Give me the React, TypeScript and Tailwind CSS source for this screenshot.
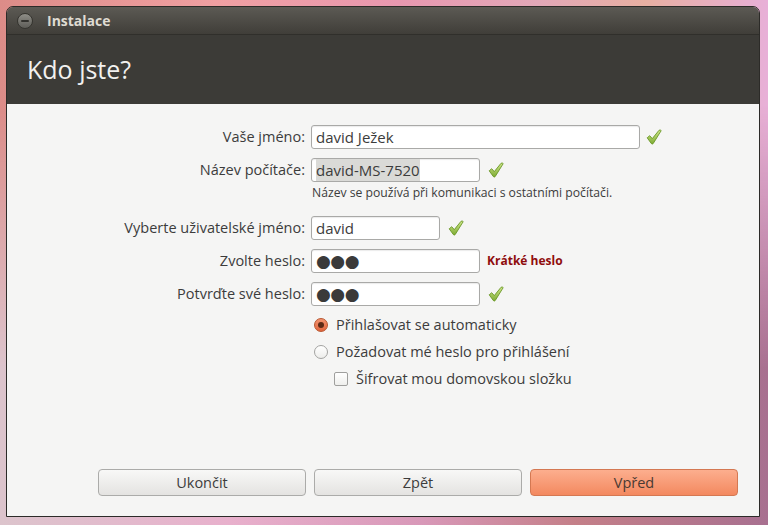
import React from 'react';

// Ubuntu installer, "Kdo jste?" (who are you) step
const FONT = "font-['Open_Sans','Noto_Sans',sans-serif]";

function Check() {
  return (
    <svg width="18" height="18" viewBox="0 0 18 18" className="shrink-0">
      <defs>
        <linearGradient id="chk" x1="0" y1="0" x2="0" y2="1">
          <stop offset="0" stopColor="#d2e88c" />
          <stop offset="1" stopColor="#7dab33" />
        </linearGradient>
      </defs>
      <path
        d="M2.2 9.8 L4.7 7.7 L7.3 10.6 L14 2.3 Q15.3 1.5 16.2 2.6 L8.3 15.4 Q7.3 16.7 6.3 15.5 Z"
        fill="url(#chk)"
        stroke="#6a9727"
        strokeWidth="0.9"
        strokeLinejoin="round"
      />
    </svg>
  );
}

function Field({ width, children }: { width: string; children: React.ReactNode }) {
  return (
    <div
      className={`ml-[6px] flex h-[24px] items-center rounded-[3px] border border-[#a9a9a7] bg-white pl-[4px] text-[15px] text-[#3c3c3c] shadow-[inset_0_1px_1px_rgba(0,0,0,0.08)] ${width}`}
    >
      {children}
    </div>
  );
}

function Row({ label, children }: { label: string; children: React.ReactNode }) {
  return (
    <div className="flex h-[24px] items-center">
      <div className="w-[298px] text-right text-[14.5px] text-[#3c3c3c]">{label}</div>
      {children}
    </div>
  );
}

function Dots() {
  return (
    <span className="font-['DejaVu_Sans',sans-serif] text-[17px] leading-none tracking-[-0.5px] text-[#3a3a3a]">
      ●●●
    </span>
  );
}

function Button({ label, primary }: { label: string; primary?: boolean }) {
  return (
    <button
      className={
        primary
          ? 'h-[27px] w-[208px] rounded-[4px] border border-[#d47852] bg-gradient-to-b from-[#fcae8e] to-[#f3895f] text-[14.5px] text-[#4a3a33]'
          : 'h-[27px] w-[208px] rounded-[4px] border border-[#ababa9] bg-gradient-to-b from-[#f8f8f7] to-[#e4e3e1] text-[14.5px] text-[#3c3c3c]'
      }
    >
      {label}
    </button>
  );
}

export default function App() {
  return (
    <div
      className={`relative h-[525px] w-[768px] overflow-hidden bg-[linear-gradient(to_right,#dc8c88,#f0a0a2_28%,#e898b0_52%,#e2a8b8_70%,#e8b0a2_84%,#e8b0d8)] pl-[6px] pt-[6px] ${FONT}`}
    >
      {/* lower half of the wallpaper, faded in toward the bottom */}
      <div className="absolute inset-0 bg-[linear-gradient(to_right,#dcc4cc,#e8b0cc_30%,#d898b8_55%,#c47f88_75%,#a87090)] [mask-image:linear-gradient(to_bottom,transparent_20%,black_70%)]" />

      <div className="relative z-10 flex h-[511px] w-[754px] flex-col overflow-hidden rounded-t-[7px] border border-[#2c2b28]">
        {/* title bar */}
        <div className="flex h-[28px] items-center border-b border-[#302f2b] bg-gradient-to-b from-[#5c5a54] to-[#403e39] pl-[10px]">
          <span className="grid h-[16px] w-[16px] place-items-center rounded-full border border-[#35342f] bg-gradient-to-b from-[#8e8d87] to-[#5e5d58]">
            <span className="h-[2px] w-[8px] rounded-full bg-[#33322e]" />
          </span>
          <span className="ml-[14px] text-[14px] font-bold text-[#dfdbd2]">Instalace</span>
        </div>

        {/* header */}
        <div className="flex h-[69px] items-center bg-[#3c3b37] pl-[20px]">
          <h1 className="text-[25px] font-normal text-[#f2f1ef]">Kdo jste?</h1>
        </div>

        {/* form */}
        <div className="flex flex-1 flex-col bg-[#f5f5f4] pt-[21px]">
          <Row label="Vaše jméno:">
            <Field width="w-[329px]">david Ježek</Field>
            <span className="ml-[5px]">
              <Check />
            </span>
          </Row>

          <div className="mt-[9px]">
            <Row label="Název počítače:">
              <Field width="w-[169px]">
                <span className="bg-[#dadad7]">david-MS-7520</span>
              </Field>
              <span className="ml-[7px]">
                <Check />
              </span>
            </Row>
          </div>

          <p className="mt-[3px] pl-[305px] text-[12.2px] leading-[16px] text-[#3c3c3c]">
            Název se používá při komunikaci s ostatními počítači.
          </p>

          <div className="mt-[15px]">
            <Row label="Vyberte uživatelské jméno:">
              <Field width="w-[129px]">david</Field>
              <span className="ml-[7px]">
                <Check />
              </span>
            </Row>
          </div>

          <div className="mt-[9px]">
            <Row label="Zvolte heslo:">
              <Field width="w-[169px]">
                <Dots />
              </Field>
              <span className="ml-[7px] text-[12px] font-bold text-[#8f0d0d]">Krátké heslo</span>
            </Row>
          </div>

          <div className="mt-[9px]">
            <Row label="Potvrďte své heslo:">
              <Field width="w-[169px]">
                <Dots />
              </Field>
              <span className="ml-[7px]">
                <Check />
              </span>
            </Row>
          </div>

          <div className="mt-[9px] flex h-[20px] items-center pl-[307px]">
            <span className="grid h-[14px] w-[14px] place-items-center rounded-full border border-[#b9562f] bg-gradient-to-b from-[#f29470] to-[#e0643c]">
              <span className="h-[6px] w-[6px] rounded-full bg-[#5c2a16]" />
            </span>
            <span className="ml-[8px] text-[14.5px] text-[#3c3c3c]">Přihlašovat se automaticky</span>
          </div>

          <div className="mt-[7px] flex h-[20px] items-center pl-[307px]">
            <span className="h-[14px] w-[14px] rounded-full border border-[#a3a3a1] bg-gradient-to-b from-white to-[#ededeb]" />
            <span className="ml-[8px] text-[14.5px] text-[#3c3c3c]">Požadovat mé heslo pro přihlášení</span>
          </div>

          <div className="mt-[7px] flex h-[20px] items-center pl-[327px]">
            <span className="h-[14px] w-[14px] rounded-[2px] border border-[#9f9f9d] bg-gradient-to-b from-white to-[#efefed]" />
            <span className="ml-[8px] text-[14.5px] text-[#3c3c3c]">Šifrovat mou domovskou složku</span>
          </div>

          <div className="mt-auto flex justify-end gap-[8px] pb-[20px] pr-[21px]">
            <Button label="Ukončit" />
            <Button label="Zpět" />
            <Button label="Vpřed" primary />
          </div>
        </div>
      </div>
    </div>
  );
}
